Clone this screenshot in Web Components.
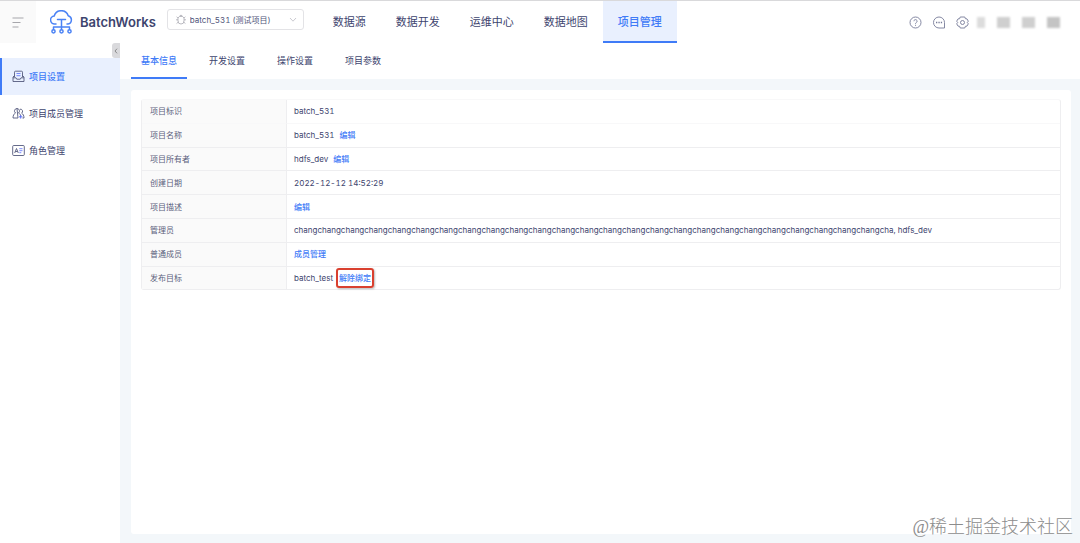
<!DOCTYPE html>
<html lang="zh-CN">
<head>
<meta charset="utf-8">
<title>BatchWorks</title>
<style>
  :root {
    --blue: #3f7bf7;
    --blue-bg: #e9f0fe;
    --text: #3d446e;
    --page: #f3f7fa;
    --line: #eeeef0;
  }
  body {
    margin: 0;
    font-family: Inter, "Noto Sans CJK SC", sans-serif;
    font-size: 9px;
    font-variant-numeric: tabular-nums;
    color: var(--text);
  }
</style>
</head>
<body>
<batch-app>
  <app-header slot="header">
    <nav-item>数据源</nav-item>
    <nav-item>数据开发</nav-item>
    <nav-item>运维中心</nav-item>
    <nav-item>数据地图</nav-item>
    <nav-item active>项目管理</nav-item>
  </app-header>
  <side-menu slot="side">
    <side-item icon="inbox" active>项目设置</side-item>
    <side-item icon="users">项目成员管理</side-item>
    <side-item icon="card">角色管理</side-item>
  </side-menu>
  <tab-bar>
    <tab-item active>基本信息</tab-item>
    <tab-item>开发设置</tab-item>
    <tab-item>操作设置</tab-item>
    <tab-item>项目参数</tab-item>
  </tab-bar>
  <content-panel>
    <info-table></info-table>
  </content-panel>
  <water-mark slot="mark">@稀土掘金技术社区</water-mark>
</batch-app>

<script>
// small helper, every element below has an open shadow root
class BaseElement extends HTMLElement {
  constructor() {
    super();
    const template = document.createElement("template");
    template.innerHTML = this.render();
    this.attachShadow({ mode: "open" });
    this.shadowRoot.appendChild(template.content.cloneNode(true));
  }
}

// page frame
customElements.define("batch-app", class extends BaseElement {
  render() {
    return `
      <style>
        :host { display: flex; flex-direction: column; min-height: 100vh; background: #fff; }
        .body { display: flex; flex: 1; }
        main { flex: 1; min-width: 0; display: flex; flex-direction: column; background: var(--page); }
      </style>
      <slot name="header"></slot>
      <div class="body">
        <slot name="side"></slot>
        <main><slot></slot></main>
      </div>
      <slot name="mark"></slot>
    `;
  }
});

customElements.define("app-header", class extends BaseElement {
  render() {
    return `
      <style>
        :host { display: block; }
        header { display: flex; height: 43px; box-sizing: border-box; border-top: 1px solid #d9d9db; }
        button { border: 0; padding: 0; background: none; display: flex; align-items: center; justify-content: center; cursor: pointer; }
        .menu { width: 36px; background: #fafafa; }
        .logo { display: flex; align-items: center; gap: 7px; margin-left: 14px; font-size: 13px; font-weight: 600; }
        nav { display: flex; margin-left: 14px; }
        .tools { display: flex; align-items: center; gap: 10px; margin-left: auto; margin-right: 20px; }
        .user { display: flex; align-items: center; gap: 12px; filter: blur(1px); margin-left: -2px; }
        .user i { width: 13px; height: 11px; background: #cfcfcf; }
        .user i:first-child { width: 8px; background: #dcdcdc; }
        .user i:last-child { background: #c4c4c4; }
      </style>
      <header>
        <button class="menu" aria-label="菜单">
          <svg width="12" height="11" viewBox="0 0 12 11" fill="none" stroke="#a6a6ab" stroke-width="1">
            <path d="M.5 1h11M.5 5.5h8M.5 10h6"/>
          </svg>
        </button>
        <div class="logo">
          <svg width="23" height="24" viewBox="0 0 23 24" fill="none" stroke="#4a82f5" stroke-width="1.500" stroke-linecap="round" stroke-linejoin="round">
            <path d="M6 14H5a4 4 0 0 1-.8-8 7.300 7.300 0 0 1 14-.2A4.200 4.200 0 0 1 18 14h-1M7.500 9.500h8M11.500 9.500v10M3.500 19.500v-2.500h16v2.500"/>
            <circle cx="3.500" cy="21.300" r="1.600"/><circle cx="11.500" cy="21.300" r="1.600"/><circle cx="19.500" cy="21.300" r="1.600"/>
          </svg>
          <span>BatchWorks</span>
        </div>
        <project-select></project-select>
        <nav><slot></slot></nav>
        <div class="tools">
          <button aria-label="帮助">
            <svg width="13" height="13" viewBox="0 0 13 13" fill="none" stroke="#777c98" stroke-width=".9">
              <circle cx="6.500" cy="6.500" r="5.500"/>
              <path d="M4.900 5.200a1.600 1.600 0 1 1 2.400 1.400c-.6.3-.8.6-.8 1.200M6.500 8.800v1"/>
            </svg>
          </button>
          <button aria-label="消息">
            <svg width="14" height="13" viewBox="0 0 14 13" fill="none" stroke="#777c98" stroke-width=".9">
              <path d="M12.500 12H7a5.500 5.500 0 1 1 5.500-5.500z"/>
              <path d="M4 6.500h1.300M6.400 6.500h1.300M8.800 6.500h1.300" stroke-width="1.300"/>
            </svg>
          </button>
          <button aria-label="设置">
            <svg width="13" height="13" viewBox="0 0 13 13" fill="none" stroke="#777c98" stroke-width=".9" stroke-linejoin="round">
              <path d="M4.200 1h4.600l.6 1.700 1.600.2 1.300 2.300-1 1.300 1 1.300L11 10.100l-1.600.2L8.800 12H4.200l-.6-1.700-1.600-.2L.7 7.800l1-1.300-1-1.300L2 2.900l1.600-.2z"/>
              <circle cx="6.500" cy="6.500" r="2"/>
            </svg>
          </button>
          <div class="user"><i></i><i></i><i></i><i></i></div>
        </div>
      </header>
    `;
  }
});

customElements.define("project-select", class extends BaseElement {
  render() {
    return `
      <style>
        :host { display: block; margin: 8px 0 0 11px; }
        label { display: flex; align-items: center; width: 137px; height: 21px; box-sizing: border-box;
          border: 1px solid #e3e3e6; border-radius: 3px; padding: 0 6px 0 8px; }
        select { flex: 1; min-width: 0; appearance: none; border: 0; outline: 0; background: none; margin: 0;
          padding: 0 0 0 4px; font: 8px/16px Inter, "Noto Sans CJK SC", sans-serif; font-variant-numeric: tabular-nums; color: #50557a; }
      </style>
      <label>
        <svg width="10" height="11" viewBox="0 0 10 11" fill="none" stroke="#aaaab2" stroke-width=".8">
          <path d="M3.400 2.400a1.700 1.700 0 0 1 3.200 0M3.500 2.500h3L8 4v3a3 3 0 0 1-6 0V4zM0 5.800h2M8 5.800h2M.6 2.800L2 4M9.400 2.800L8 4M.6 9.500L2.300 8M9.400 9.500L7.700 8"/>
        </svg>
        <select aria-label="项目"><option>batch_531 (测试项目)</option></select>
        <svg width="8" height="6" viewBox="0 0 8 6" fill="none" stroke="#bdbdc4" stroke-width=".8">
          <path d="M1 1l3 3.200L7 1"/>
        </svg>
      </label>
    `;
  }
});

customElements.define("nav-item", class extends BaseElement {
  render() {
    return `
      <style>
        :host { display: flex; }
        a { display: flex; align-items: center; padding: 0 15px; font-size: 11px; white-space: nowrap;
          color: inherit; text-decoration: none; border-bottom: 2px solid transparent; }
        :host([active]) a { font-weight: 500; color: var(--blue); background: var(--blue-bg); border-color: var(--blue); }
      </style>
      <a href="#"><slot></slot></a>
    `;
  }
});

customElements.define("side-menu", class extends BaseElement {
  render() {
    return `
      <style>
        :host { display: block; width: 120px; flex: none; background: #fff; }
        .fold { display: flex; justify-content: flex-end; height: 15px; }
        button { display: flex; align-items: center; justify-content: center; width: 8px; padding: 0; border: 0;
          border-radius: 3px 0 0 3px; background: #d9d9dc; }
      </style>
      <div class="fold">
        <button aria-label="收起">
          <svg width="4" height="6" viewBox="0 0 4 6" fill="none" stroke="#777" stroke-width=".8"><path d="M3 .7L1 3l2 2.300"/></svg>
        </button>
      </div>
      <slot></slot>
    `;
  }
});

const sideIcons = {
  inbox: `<path d="M2.500 7V2.200a1 1 0 0 1 1-1h6a1 1 0 0 1 1 1V7M2.500 5.500L1 7v4.500h11V7l-1.500-1.500M1 7.800h3l.7 1.400h3.600L9 7.800h3"/><path d="M4.500 3.500h4M4.500 5.700h4" stroke="#6a7dfa"/>`,
  users: `<path d="M5 1.500a2.500 2.500 0 0 1 1.500 4.500c1.500.7 2.200 2 2.300 3M6 11H1c0-2.500 1-4.300 2.500-5A2.500 2.500 0 0 1 5 1.500zM8 2.200a2.200 2.200 0 0 1 1.600 4c1.500.8 2.400 2.300 2.400 4.800h-1.500"/><path d="M7 9.800h3.400M8.700 8.200v3.400" stroke="#4f63f5"/>`,
  card: `<rect x=".7" y="1.500" width="11.600" height="10" rx="1"/><path d="M2.700 9L4.500 4.500 6.300 9M3.300 7.500h2.400"/><path d="M7.300 4.700h3.200M7.300 6.700h3.200M7.300 8.700h2" stroke="#6a7dfa"/>`
};

customElements.define("side-item", class extends BaseElement {
  render() {
    return `
      <style>
        :host { display: block; }
        a { display: flex; align-items: center; gap: 4px; height: 37px; box-sizing: border-box; padding-left: 10px;
          border-left: 2px solid transparent; color: inherit; text-decoration: none; }
        :host([active]) a { font-weight: 500; color: var(--blue); background: var(--blue-bg); border-color: var(--blue); }
        svg { fill: none; stroke: #555a7e; stroke-width: .9; stroke-linejoin: round; }
      </style>
      <a href="#">
        <svg width="13" height="13" viewBox="0 0 13 13">${sideIcons[this.getAttribute("icon")]}</svg>
        <slot></slot>
      </a>
    `;
  }
});

customElements.define("tab-bar", class extends BaseElement {
  render() {
    return `
      <style>
        :host { display: block; background: #fff; }
        nav { display: flex; gap: 12px; height: 36px; padding-left: 11px; }
      </style>
      <nav><slot></slot></nav>
    `;
  }
});

customElements.define("tab-item", class extends BaseElement {
  render() {
    return `
      <style>
        :host { display: flex; }
        a { display: flex; align-items: center; padding: 0 10px; color: inherit; text-decoration: none;
          border-top: 1px solid transparent; border-bottom: 2px solid transparent; }
        :host([active]) a { font-weight: 500; color: var(--blue); border-bottom-color: var(--blue); }
      </style>
      <a href="#"><slot></slot></a>
    `;
  }
});

customElements.define("content-panel", class extends BaseElement {
  render() {
    return `
      <style>
        :host { display: block; flex: 1; margin: 11px 9px 9px 11px; padding: 9px 10px; background: #fff; border-radius: 3px; }
      </style>
      <slot></slot>
    `;
  }
});

// label, value, link text, link highlighted
const rows = [
  ["项目标识", "batch_531"],
  ["项目名称", "batch_531", "编辑"],
  ["项目所有者", "hdfs_dev", "编辑"],
  ["创建日期", "2022-12-12 14:52:29"],
  ["项目描述", "", "编辑"],
  ["管理员", "chang".repeat(25) + "cha, hdfs_dev"],
  ["普通成员", "", "成员管理"],
  ["发布目标", "batch_test", "解除绑定", true]
];

customElements.define("info-table", class extends BaseElement {
  render() {
    return `
      <style>
        :host { display: block; }
        table { width: 100%; height: 191px; border-collapse: separate; border-spacing: 0; font-size: 8px; line-height: 16px;
          border: 1px solid var(--line); border-top-color: #f8f8f9; border-radius: 3px; }
        th, td { padding: 0 7px; text-align: left; border-bottom: 1px solid var(--line); }
        th { width: 129px; padding-left: 8px; font-weight: 400; color: #5b5f7c; background: #fafafa; border-right: 1px solid var(--line); }
        tr:first-child > * { border-bottom-color: #f8f8f9; }
        tr:last-child > * { border-bottom: 0; }
        a { color: var(--blue); text-decoration: none; font-weight: 500; }
        span + a { margin-left: 5px; }
        span + a.mark { display: inline-block; margin: -2px 0 -2px 3px; padding: 0 1px; border: 2px solid #d9402f; border-radius: 3px;
          box-shadow: 1px 1px 2px #0004; }
      </style>
      <table>
        ${rows.map(([label, value, link, mark]) => `
          <tr>
            <th scope="row">${label}</th>
            <td>${value ? `<span>${value}</span>` : ""}${link ? `<a href="#" class="${mark ? "mark" : ""}">${link}</a>` : ""}</td>
          </tr>`).join("")}
      </table>
    `;
  }
});

// lies over the bottom right corner of the page
customElements.define("water-mark", class extends BaseElement {
  render() {
    return `
      <style>
        :host { position: absolute; right: 7px; bottom: 4px; font: 300 18px/24px "Liberation Serif", "Noto Sans CJK SC", serif;
          color: #8c8c8c; pointer-events: none; }
      </style>
      <slot></slot>
    `;
  }
});
</script>
</body>
</html>
